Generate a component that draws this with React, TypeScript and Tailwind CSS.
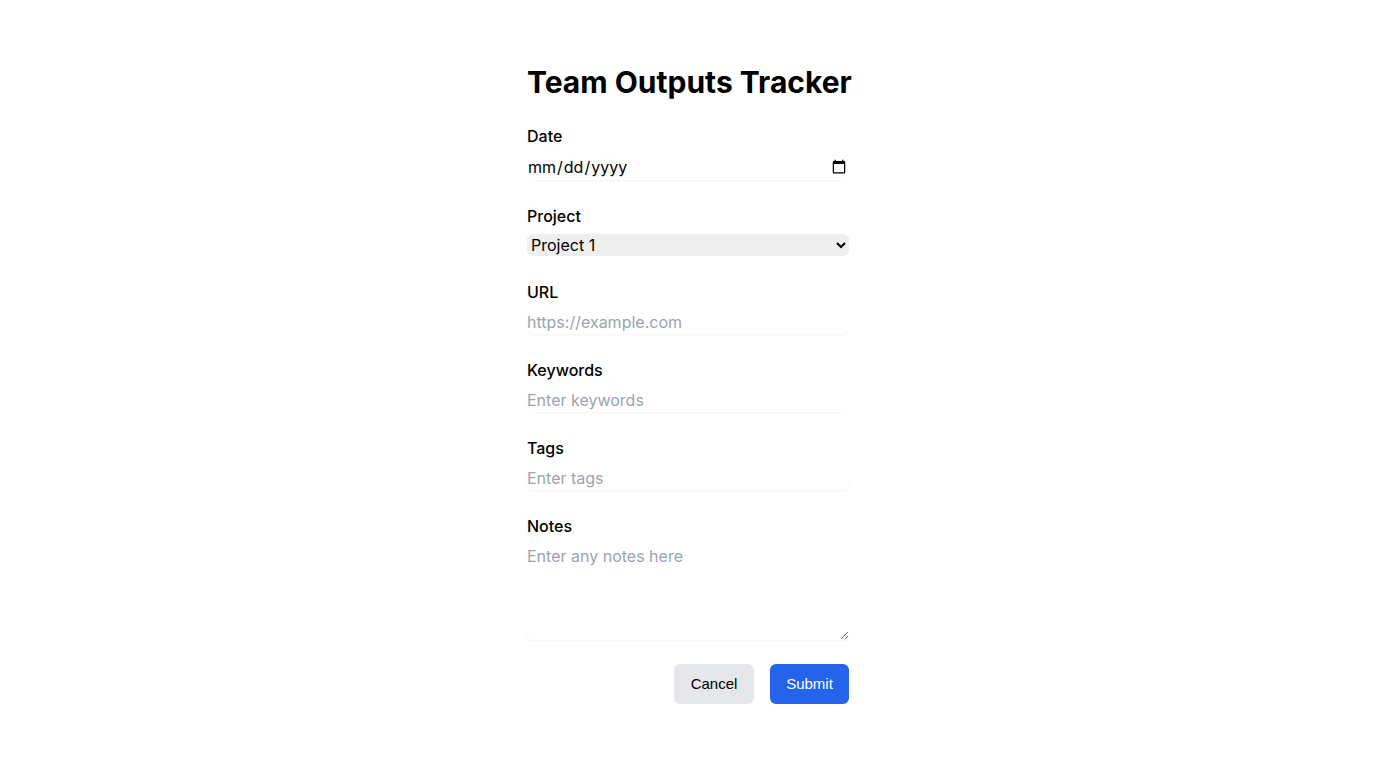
export default function App() {
  const font = { fontFamily: "Inter, 'Noto Sans', sans-serif" };
  const btnFont = { fontFamily: "'Liberation Sans', Arial, sans-serif" };
  const inputCls =
    "block w-full h-6 text-base leading-6 text-black placeholder:text-[#9ca3af] rounded-md shadow-[0_1px_2px_0_rgba(0,0,0,0.05)] outline-none";

  return (
    <div className="min-h-screen bg-white flex justify-center pt-16" style={font}>
      <form className="w-[322px] flex flex-col">
        <h1 className="text-[30px] leading-9 font-bold text-black whitespace-nowrap mb-6">Team Outputs Tracker</h1>

        <div className="flex flex-col gap-6">
          <div className="flex flex-col gap-1.5">
            <label className="text-base leading-6 font-medium text-black">Date</label>
            <input
              type="date"
              className="block w-full h-[26px] text-base text-black rounded-md shadow-[0_1px_2px_0_rgba(0,0,0,0.05)] outline-none"
            />
          </div>

          <div className="flex flex-col gap-1.5">
            <label className="text-base leading-6 font-medium text-black">Project</label>
            <select className="block w-full h-[22px] text-base text-black bg-[#efefef] rounded-md outline-none">
              <option>Project 1</option>
              <option>Project 2</option>
              <option>Project 3</option>
            </select>
          </div>

          <div className="flex flex-col gap-1.5">
            <label className="text-base leading-6 font-medium text-black">URL</label>
            <input type="url" placeholder="https://example.com" className={inputCls} />
          </div>

          <div className="flex flex-col gap-1.5">
            <label className="text-base leading-6 font-medium text-black">Keywords</label>
            <input type="text" placeholder="Enter keywords" className={inputCls} />
          </div>

          <div className="flex flex-col gap-1.5">
            <label className="text-base leading-6 font-medium text-black">Tags</label>
            <input type="text" placeholder="Enter tags" className={inputCls} />
          </div>

          <div className="flex flex-col gap-1.5">
            <label className="text-base leading-6 font-medium text-black">Notes</label>
            <textarea
              rows={4}
              placeholder="Enter any notes here"
              className="block w-full h-24 text-base leading-6 text-black placeholder:text-[#9ca3af] rounded-md shadow-[0_1px_2px_0_rgba(0,0,0,0.05)] outline-none"
            />
          </div>

          <div className="flex justify-end gap-4">
            <button
              type="button"
              style={btnFont}
              className="h-10 w-20 rounded-md bg-[#e5e7eb] text-[15px] font-medium text-black"
            >
              Cancel
            </button>
            <button
              type="submit"
              style={btnFont}
              className="h-10 w-[79px] rounded-md bg-[#2563eb] text-[15px] font-medium text-white"
            >
              Submit
            </button>
          </div>
        </div>
      </form>
    </div>
  );
}
